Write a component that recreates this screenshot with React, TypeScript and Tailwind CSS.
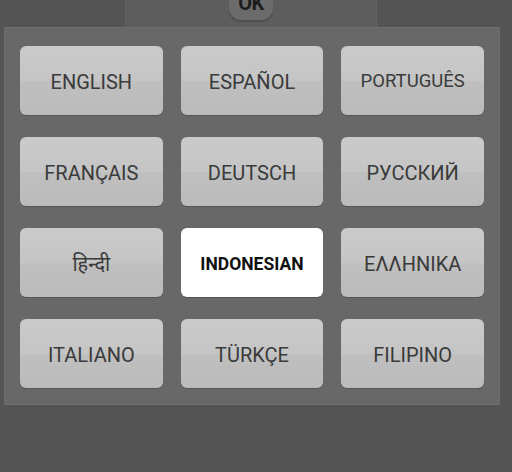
const LANGUAGES = [
  { label: "ENGLISH" },
  { label: "ESPAÑOL" },
  { label: "PORTUGUÊS", small: true },
  { label: "FRANÇAIS" },
  { label: "DEUTSCH" },
  { label: "РУССКИЙ" },
  { label: "हिन्दी" },
  { label: "INDONESIAN", active: true },
  { label: "ΕΛΛΗΝΙΚΑ" },
  { label: "ITALIANO" },
  { label: "TÜRKÇE" },
  { label: "FILIPINO" },
];

export default function App() {
  return (
    <div
      className="w-[512px] h-[472px] bg-[#545454] overflow-hidden"
      style={{ fontFamily: "Roboto, 'Noto Sans', sans-serif" }}
    >
      {/* top strip with the OK button, cut off by the window edge */}
      <div className="ml-[125px] w-[252px] h-[27px] bg-[#5d5d5d] border-x border-[#606060] flex justify-center overflow-hidden">
        <div className="-mt-[14px] w-[44px] h-[34px] rounded-b-[12px] rounded-t-[4px] bg-[#6b6b6b] shadow-[0_2px_1px_#4f4f4f] flex items-start justify-center">
          <span className="mt-[5px] text-[20px] leading-[24px] font-bold text-[#1c1c1c] tracking-tight">OK</span>
        </div>
      </div>

      {/* language grid */}
      <div className="ml-[4px] w-[496px] bg-[#686868] border border-[#6e6e6e] pt-[18px] pb-[16px] px-[15px] grid grid-cols-3 gap-x-[18px] gap-y-[22px]">
        {LANGUAGES.map((lang) => (
          <button
            key={lang.label}
            className={
              lang.active
                ? "h-[69px] pt-[3px] rounded-[6px] bg-white shadow-[0_1px_0_#555] flex items-center justify-center text-[17.5px] font-bold text-[#111]"
                : "h-[69px] pt-[3px] rounded-[6px] bg-[linear-gradient(#cacaca,#c5c5c5_50%,#bfbfbf_52%,#bbbbbb)] shadow-[0_1px_0_#555] flex items-center justify-center text-[#3a3a3a] " +
                  (lang.small ? "text-[18.5px]" : "text-[20px]")
            }
          >
            {lang.label}
          </button>
        ))}
      </div>
    </div>
  );
}
